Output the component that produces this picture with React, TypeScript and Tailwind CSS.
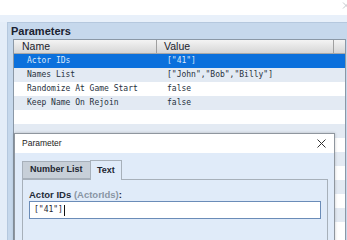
import React from "react";

const sans = { fontFamily: '"Liberation Sans", Arial, sans-serif' };
const mono = { fontFamily: '"DejaVu Sans Mono", "Liberation Mono", monospace' };

const rows: [string, string][] = [
  ["Actor IDs", '["41"]'],
  ["Names List", '["John","Bob","Billy"]'],
  ["Randomize At Game Start", "false"],
  ["Keep Name On Rejoin", "false"],
  ["", ""],
  ["", ""],
  ["", ""],
  ["", ""],
  ["", ""],
  ["", ""],
  ["", ""],
  ["", ""],
  ["", ""],
];

export default function App() {
  return (
    <div className="relative w-[347px] h-[240px] overflow-hidden bg-[#e4edf8]" style={sans}>
      <div className="h-[15px] bg-white relative">
        <svg className="absolute left-[342px] top-[2px]" width="8" height="7" viewBox="0 0 8 7">
          <path d="M1 0.5 L7 6.5 M7 0.5 L1 6.5" stroke="#c4c8cc" strokeWidth="1" fill="none" />
        </svg>
      </div>
      <div className="h-[7px] bg-[#e8f0fa]" />
      <div className="ml-[7px] h-[300px] bg-[#c6d8ec] border-l border-t border-[#b5c8de] flex flex-col">
        <div className="h-[16px] flex items-center pl-[3px] text-[11px] font-bold text-[#1a2230]">
          Parameters
        </div>
        <div className="ml-[5px] mr-[1px] flex-1 bg-white border border-[#8b98a6] flex flex-col">
          <div className="h-[14px] flex text-[10.5px] text-[#1a222c] bg-gradient-to-b from-[#f4f4f4] to-[#d6d6d6] border-b border-[#a8a8a8]">
            <div className="w-[143px] pl-[8px] flex items-center border-r border-[#a0a0a0]">Name</div>
            <div className="w-[177px] pl-[7px] flex items-center border-r border-[#a0a0a0]">Value</div>
            <div className="flex-1" />
          </div>
          {rows.map((r, i) => {
            const sel = i === 0;
            const bg = sel ? "bg-[#0b70dc] text-[#dbe8fb]" : i % 2 === 1 ? "bg-[#e3eaf3] text-[#27313d]" : "bg-white text-[#27313d]";
            return (
              <div key={i} className={`h-[14px] flex items-center text-[8px] ${bg}`} style={mono}>
                <div className="w-[144px] pl-[13px] whitespace-pre">{r[0]}</div>
                <div className="pl-[9px] whitespace-pre">{r[1]}</div>
              </div>
            );
          })}
        </div>
      </div>

      {/* Dialog */}
      <div className="absolute left-[14px] top-[133px] w-[321px] h-[140px] border border-[#8f969e] bg-[#e0ebf9] flex flex-col shadow-[0_0_3px_rgba(0,0,0,0.2)]">
        <div className="h-[19px] bg-white flex items-center justify-between pl-[7px] pr-[8px]">
          <span className="text-[8.5px] text-[#222]">Parameter</span>
          <svg width="9" height="9" viewBox="0 0 9 9">
            <path d="M0.5 0.5 L8.5 8.5 M8.5 0.5 L0.5 8.5" stroke="#333" strokeWidth="1" fill="none" />
          </svg>
        </div>
        <div className="pl-[7px] pr-[6px] pt-[6px] flex flex-col">
          <div className="flex items-end h-[20px]">
            <div className="w-[68px] h-[18px] flex items-center pl-[7px] bg-[#c7cfd8] border border-[#a7b0ba] border-r-0 text-[9px] font-bold text-[#1e2632]">
              Number List
            </div>
            <div className="w-[32px] h-[20px] flex items-center pl-[6px] bg-[#e0ebf9] border border-b-0 border-[#a7b0ba] text-[9px] font-bold text-[#1e2632] relative top-[1px]">
              Text
            </div>
          </div>
          <div className="h-[80px] border border-[#a7b0ba] pl-[6px] pr-[6px] pt-[9px]">
            <div className="text-[9.5px] font-bold text-[#1e2a38] leading-[11px]">
              Actor IDs <span className="text-[#8995a4]">(ActorIds)</span>:
            </div>
            <div className="mt-[1px] h-[18px] w-[292px] bg-white border border-[#6b8cb8] flex items-center pl-[4px]">
              <span className="text-[8px] text-[#1e2632]" style={mono}>["41"]</span>
              <span className="ml-[1px] w-[1px] h-[11px] bg-[#111]" />
            </div>
          </div>
        </div>
      </div>
    </div>
  );
}
